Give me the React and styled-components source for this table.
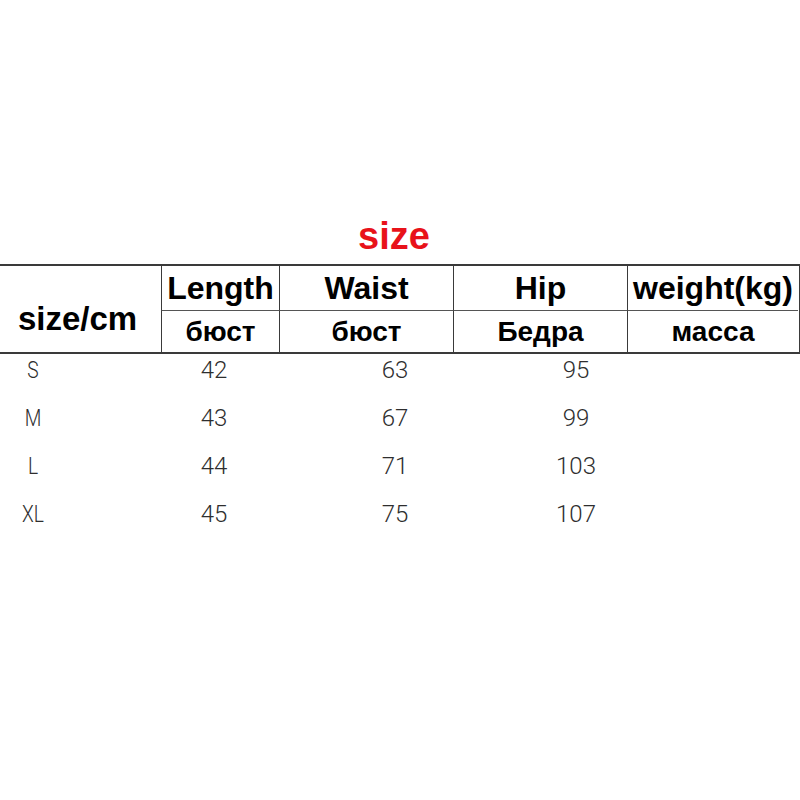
import React from 'react';
import styled, { createGlobalStyle } from 'styled-components';

const GlobalStyle = createGlobalStyle`
    html, body {
        margin: 0;
        padding: 0;
        background: #fff;
    }
    body {
        font-family: "Liberation Sans", Arial, sans-serif;
    }
`;

const Page = styled.div`
    width: 800px;
    height: 800px;
    padding-top: 214px;
    box-sizing: border-box;
`;

const Title = styled.h1`
    margin: 0 12px 0 0;
    text-align: center;
    color: #e8121a;
    font-size: 38px;
    font-weight: 700;
    line-height: 44px;
    height: 50px;
`;

const Head = styled.div`
    display: grid;
    grid-template-columns: 161px 118px 174px 174px 171px;
    grid-template-rows: 44px 42px;
    width: 799px;
    border-top: 2px solid #3a3a3a;
    border-bottom: 2px solid #3a3a3a;
    border-right: 2px solid #3a3a3a;
`;

const Cell = styled.div`
    display: flex;
    align-items: center;
    justify-content: center;
    color: #000;
    font-weight: 700;
    font-size: ${(p) => (p.$sub ? '28px' : '32px')};
    border-left: ${(p) => (p.$first ? 'none' : '1.5px solid #3a3a3a')};
    border-top: ${(p) => (p.$sub ? '1px solid #555' : 'none')};
    white-space: nowrap;
`;

const CornerCell = styled(Cell)`
    grid-row: 1 / 3;
    font-size: 33px;
    padding-top: 20px;
    padding-right: 6px;
    box-sizing: border-box;
`;

const Data = styled.div`
    display: grid;
    grid-template-columns: repeat(4, 66px);
    column-gap: 115px;
    grid-auto-rows: 32px;
    row-gap: 16px;
`;

const Value = styled.div`
    display: flex;
    align-items: center;
    justify-content: center;
    font-family: Roboto, "Noto Sans", sans-serif;
    font-weight: 300;
    font-size: 24px;
    color: #2e2e2e;
    transform: ${(p) => (p.$narrow ? 'scaleX(0.8)' : 'none')};
`;

const headers = ['Length', 'Waist', 'Hip', 'weight(kg)'];
const subs = ['бюст', 'бюст', 'Бедра', 'масса'];

const rows = [
    ['S', '42', '63', '95'],
    ['M', '43', '67', '99'],
    ['L', '44', '71', '103'],
    ['XL', '45', '75', '107'],
];

const App = () => {
    return (
        <>
            <GlobalStyle />
            <Page>
                <Title>size</Title>
                <Head>
                    <CornerCell $first>size/cm</CornerCell>
                    {headers.map((h) => (
                        <Cell key={h}>{h}</Cell>
                    ))}
                    {subs.map((s, i) => (
                        <Cell key={i} $sub>
                            {s}
                        </Cell>
                    ))}
                </Head>
                <Data>
                    {rows.map((r) =>
                        r.map((v, i) => (
                            <Value key={r[0] + i} $narrow={i === 0}>
                                {v}
                            </Value>
                        ))
                    )}
                </Data>
            </Page>
        </>
    );
};

export default App;
